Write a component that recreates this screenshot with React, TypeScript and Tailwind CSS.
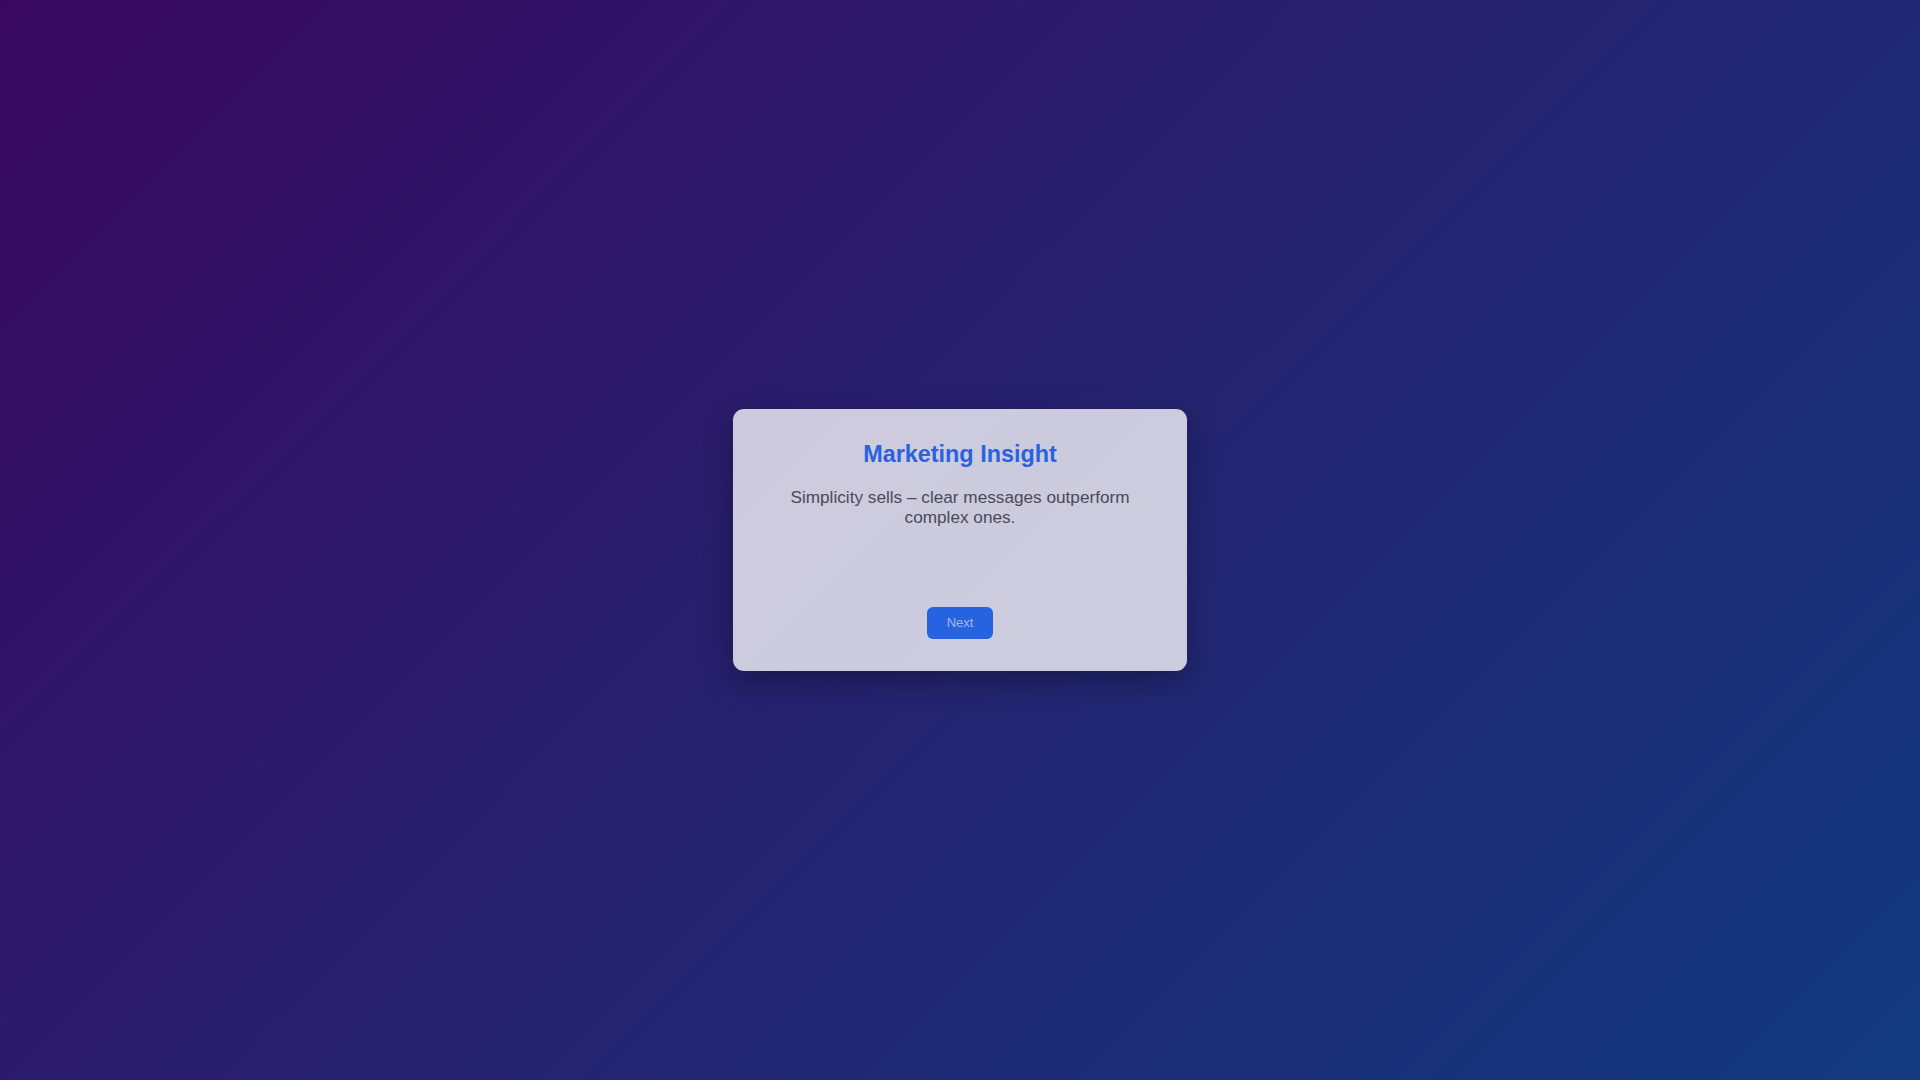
import React from 'react';

export default function App() {
  return (
    <div
      className="min-h-screen w-full flex items-center justify-center bg-[linear-gradient(135deg,#390960,#123a7f)]"
      style={{ fontFamily: '"Liberation Sans", Arial, sans-serif' }}
    >
      {/* insight card */}
      <div className="w-[454px] rounded-[11px] bg-white/[0.77] px-8 pt-8 pb-8 flex flex-col items-center text-center shadow-[0_10px_30px_rgba(0,0,0,0.3)]">
        <h2 className="text-[23.4px] font-bold leading-[27px] text-[#2a62de] mb-[19px]">
          Marketing Insight
        </h2>
        <p className="text-[17.2px] leading-[20px] text-[#4a4a58]">
          Simplicity sells – clear messages outperform complex ones.
        </p>
        <button className="mt-[80px] h-8 px-5 rounded-md bg-[#2563e0] text-[13px] text-[#a9b8e8] flex items-center justify-center">
          Next
        </button>
      </div>
    </div>
  );
}
